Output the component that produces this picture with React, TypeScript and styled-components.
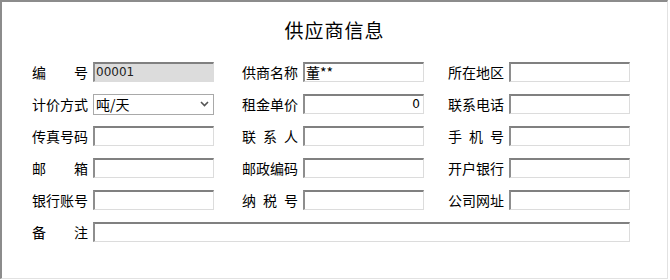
import React from "react";
import styled, { createGlobalStyle } from "styled-components";

const Global = createGlobalStyle`
  html, body { margin: 0; padding: 0; background: #ffffff; }
  * { box-sizing: border-box; }
`;

const Frame = styled.div`
  width: 668px;
  height: 279px;
  background: #ffffff;
  border-top: 2px solid #8c8c8c;
  border-left: 2px solid #8c8c8c;
  border-right: 1px solid #e2e2e2;
  border-bottom: 1px solid #e2e2e2;
  padding: 16px 0 0 30px;
  font-family: "Noto Sans CJK SC", "Noto Sans", sans-serif;
  color: #000;
`;

const Title = styled.h1`
  margin: 0 0 20px -30px;
  font-size: 19px;
  line-height: 24px;
  font-weight: 400;
  letter-spacing: 1px;
  text-align: center;
`;

const Form = styled.div`
  display: grid;
  grid-template-columns: 210px 206px 182px;
  row-gap: 12px;
`;

const Field = styled.div<{ $span?: number }>`
  display: flex;
  align-items: center;
  gap: 5px;
  grid-column: span ${(p) => p.$span ?? 1};
  width: ${(p) => (p.$span ? "100%" : "182px")};
  height: 20px;
`;

const Label = styled.span`
  width: 56px;
  flex: none;
  font-size: 14px;
  line-height: 20px;
  text-align: justify;
  text-align-last: justify;
  white-space: nowrap;
`;

const Box = styled.div<{ $grey?: boolean; $right?: boolean; $cjk?: boolean }>`
  flex: 1;
  height: 20px;
  background: ${(p) => (p.$grey ? "#dcdcdc" : "#ffffff")};
  border-top: 2px solid #808080;
  border-left: 2px solid #8e8e8e;
  border-right: 1px solid #dcdcdc;
  border-bottom: 1px solid #dcdcdc;
  padding: 0 3px 0 1px;
  display: flex;
  align-items: center;
  justify-content: ${(p) => (p.$right ? "flex-end" : "flex-start")};
  font-family: ${(p) =>
    p.$cjk ? `"Noto Sans CJK SC", sans-serif` : `"DejaVu Sans", "Liberation Sans", sans-serif`};
  font-size: ${(p) => (p.$cjk ? "14px" : "12px")};
  line-height: 17px;
  color: ${(p) => (p.$grey ? "#222" : "#000")};
`;

const Select = styled.div`
  flex: 1;
  height: 21px;
  border: 1px solid #a9a9a9;
  background: #fff;
  display: flex;
  align-items: center;
  justify-content: space-between;
  padding: 0 4px 0 2px;
  font-size: 14px;
  line-height: 19px;
`;

const Chevron = () => (
  <svg width="9" height="6" viewBox="0 0 9 6">
    <path d="M1 1 L4.5 4.5 L8 1" fill="none" stroke="#555" strokeWidth="1.6" />
  </svg>
);

export default function App() {
  return (
    <>
      <Global />
      <Frame>
        <Title>供应商信息</Title>
        <Form>
          <Field>
            <Label>编号</Label>
            <Box $grey>00001</Box>
          </Field>
          <Field>
            <Label>供商名称</Label>
            <Box $cjk>董**</Box>
          </Field>
          <Field>
            <Label>所在地区</Label>
            <Box />
          </Field>

          <Field>
            <Label>计价方式</Label>
            <Select>
              <span>吨/天</span>
              <Chevron />
            </Select>
          </Field>
          <Field>
            <Label>租金单价</Label>
            <Box $right>0</Box>
          </Field>
          <Field>
            <Label>联系电话</Label>
            <Box />
          </Field>

          <Field>
            <Label>传真号码</Label>
            <Box />
          </Field>
          <Field>
            <Label>联系人</Label>
            <Box />
          </Field>
          <Field>
            <Label>手机号</Label>
            <Box />
          </Field>

          <Field>
            <Label>邮箱</Label>
            <Box />
          </Field>
          <Field>
            <Label>邮政编码</Label>
            <Box />
          </Field>
          <Field>
            <Label>开户银行</Label>
            <Box />
          </Field>

          <Field>
            <Label>银行账号</Label>
            <Box />
          </Field>
          <Field>
            <Label>纳税号</Label>
            <Box />
          </Field>
          <Field>
            <Label>公司网址</Label>
            <Box />
          </Field>

          <Field $span={3}>
            <Label>备注</Label>
            <Box />
          </Field>
        </Form>
      </Frame>
    </>
  );
}
